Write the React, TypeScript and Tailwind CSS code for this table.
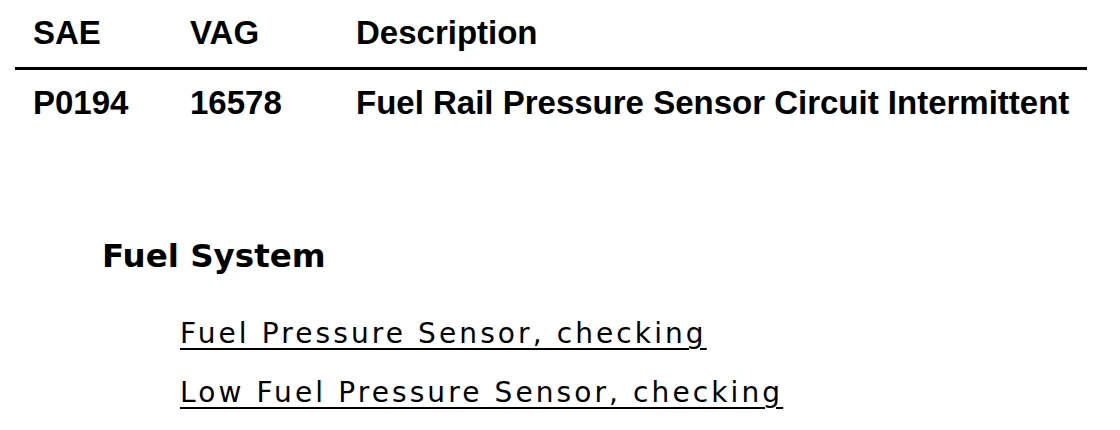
import React from "react";

type Code = { sae: string; vag: string; description: string };

const codes: Code[] = [
  { sae: "P0194", vag: "16578", description: "Fuel Rail Pressure Sensor Circuit Intermittent" },
];

const links = ["Fuel Pressure Sensor, checking", "Low Fuel Pressure Sensor, checking"];

export default function App() {
  return (
    <div className="w-[1120px] h-[430px] bg-white text-black overflow-hidden">
      {/* Fault code table */}
      <div className="ml-[15px] w-[1072px] font-['Liberation_Sans',Arial,sans-serif] font-bold text-[33px] leading-[38px]">
        <div className="flex pl-[18px] pt-[14px] pb-[15px] border-b-[3px] border-black">
          <div className="w-[157px]">SAE</div>
          <div className="w-[166px]">VAG</div>
          <div>Description</div>
        </div>
        {codes.map((c) => (
          <div key={c.sae} className="flex pl-[18px] mt-[14px] whitespace-nowrap">
            <div className="w-[157px]">{c.sae}</div>
            <div className="w-[166px]">{c.vag}</div>
            <div>{c.description}</div>
          </div>
        ))}
      </div>

      {/* Related procedures */}
      <div className="ml-[102px] mt-[116px] font-['DejaVu_Sans',Verdana,sans-serif] font-bold text-[32.5px] leading-[36px]">
        Fuel System
      </div>
      <div className="ml-[180px] mt-[30px] font-['DejaVu_Sans',Tahoma,sans-serif] text-[28px] leading-[59px] tracking-[3.1px]">
        {links.map((l) => (
          <div key={l}>
            <a href="#" className="text-black underline decoration-2 underline-offset-[5px] whitespace-nowrap">
              {l}
            </a>
          </div>
        ))}
      </div>
    </div>
  );
}
